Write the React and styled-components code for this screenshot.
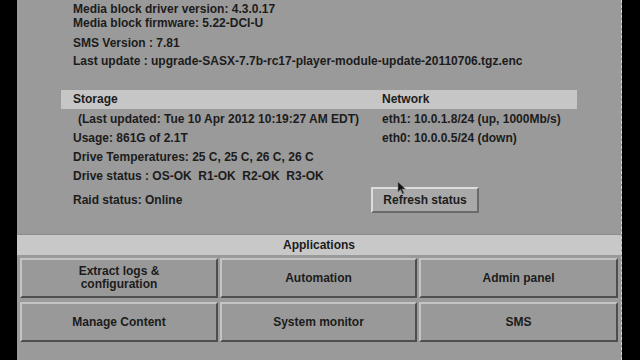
import styled, { createGlobalStyle } from "styled-components";

const GlobalStyle = createGlobalStyle`
    html, body {
        margin: 0;
        padding: 0;
        background: #000;
    }
    body {
        font-family: "Liberation Sans", Arial, sans-serif;
    }
`;

const topLines = [
    { text: "Media block driver version: 4.3.0.17", gap: 0 },
    { text: "Media block firmware: 5.22-DCI-U", gap: 0 },
    { text: "SMS Version : 7.81", gap: 6 },
    { text: "Last update : upgrade-SASX-7.7b-rc17-player-module-update-20110706.tgz.enc", gap: 4 },
];

const apps = [
    ["Extract logs &", "configuration"],
    ["Automation"],
    ["Admin panel"],
    ["Manage Content"],
    ["System monitor"],
    ["SMS"],
];

const App = () => {
    return (
        <>
            <GlobalStyle />
            <Screen>
                <Panel>
                    <Info>
                        {topLines.map((line, i) => (
                            <InfoLine key={i} $gap={line.gap}>{line.text}</InfoLine>
                        ))}
                    </Info>

                    <Status>
                        <HeaderCell>Storage</HeaderCell>
                        <HeaderCell>Network</HeaderCell>

                        <Cell $indent>(Last updated: Tue 10 Apr 2012 10:19:27 AM EDT)</Cell>
                        <Cell>eth1: 10.0.1.8/24 (up, 1000Mb/s)</Cell>

                        <Cell>Usage: 861G of 2.1T</Cell>
                        <Cell>eth0: 10.0.0.5/24 (down)</Cell>

                        <Cell>Drive Temperatures: 25 C, 25 C, 26 C, 26 C</Cell>
                        <Cell />

                        <Cell>
                            Drive status : OS-OK&nbsp;&nbsp;R1-OK&nbsp;&nbsp;R2-OK&nbsp;&nbsp;R3-OK
                        </Cell>
                        <Cell />

                        <Cell $tall>Raid status: Online</Cell>
                        <ButtonCell>
                            <RefreshButton>Refresh status</RefreshButton>
                            <Cursor width="10" height="14" viewBox="0 0 10 14">
                                <path d="M1 1 L1 11 L3.5 8.6 L5.6 13 L7 12.3 L5 8 L8.5 8 Z" fill="#111" stroke="#777" strokeWidth="0.6" />
                            </Cursor>
                        </ButtonCell>
                    </Status>

                    <AppsBar>Applications</AppsBar>
                    <AppGrid>
                        {apps.map((label, i) => (
                            <AppButton key={i}>
                                {label.map((l, j) => <span key={j}>{l}</span>)}
                            </AppButton>
                        ))}
                    </AppGrid>
                </Panel>
            </Screen>
        </>
    );
};

export default App;

const Screen = styled.div`
    display: flex;
    width: 640px;
    height: 360px;
    background: #000;
    padding: 0 18px 0 17px;
    box-sizing: border-box;
`;

const Panel = styled.div`
    flex: 1;
    display: flex;
    flex-direction: column;
    background: #9a9a9a;
    border-right: 1px dashed #d8d8d8;
    color: #1c1c1c;
    font-size: 12px;
    font-weight: bold;
    overflow: hidden;
`;

const Info = styled.div`
    display: flex;
    flex-direction: column;
    padding: 2px 0 0 56px;
`;

const InfoLine = styled.div`
    height: 14px;
    line-height: 14px;
    margin-top: ${(p) => p.$gap}px;
    white-space: nowrap;
`;

const Status = styled.div`
    display: grid;
    grid-template-columns: 309px 207px;
    grid-template-rows: 19px 19px 19px 19px 19px 28px;
    margin: 22px 0 0 44px;
`;

const HeaderCell = styled.div`
    background: #c6c6c6;
    padding-left: 12px;
    line-height: 19px;
`;

const Cell = styled.div`
    padding-left: ${(p) => (p.$indent ? 17 : 12)}px;
    padding-top: ${(p) => (p.$tall ? 2 : 1)}px;
    line-height: ${(p) => (p.$tall ? 26 : 19)}px;
    white-space: nowrap;
`;

const ButtonCell = styled.div`
    position: relative;
    padding-top: 2px;
`;

const RefreshButton = styled.div`
    display: flex;
    align-items: center;
    justify-content: center;
    width: 108px;
    height: 26px;
    margin-left: 1px;
    box-sizing: border-box;
    background: #a9a9a9;
    border-top: 2px solid #dcdcdc;
    border-left: 2px solid #dcdcdc;
    border-bottom: 2px solid #6a6a6a;
    border-right: 2px solid #6a6a6a;
`;

const Cursor = styled.svg`
    position: absolute;
    left: 27px;
    top: -4px;
`;

const AppsBar = styled.div`
    margin-top: 21px;
    height: 20px;
    line-height: 20px;
    text-align: center;
    background: #c8c8c8;
    border-top: 1px solid #8c8c8c;
`;

const AppGrid = styled.div`
    display: grid;
    grid-template-columns: 198px 197px 199px;
    grid-template-rows: 40px 40px;
    column-gap: 2px;
    row-gap: 4px;
    padding: 3px 0 0 3px;
`;

const AppButton = styled.div`
    display: flex;
    flex-direction: column;
    align-items: center;
    justify-content: center;
    box-sizing: border-box;
    background: #999999;
    border-top: 2px solid #c4c4c4;
    border-left: 2px solid #c4c4c4;
    border-bottom: 2px solid #4e4e4e;
    border-right: 2px solid #4e4e4e;
    line-height: 13px;
    text-align: center;
`;
